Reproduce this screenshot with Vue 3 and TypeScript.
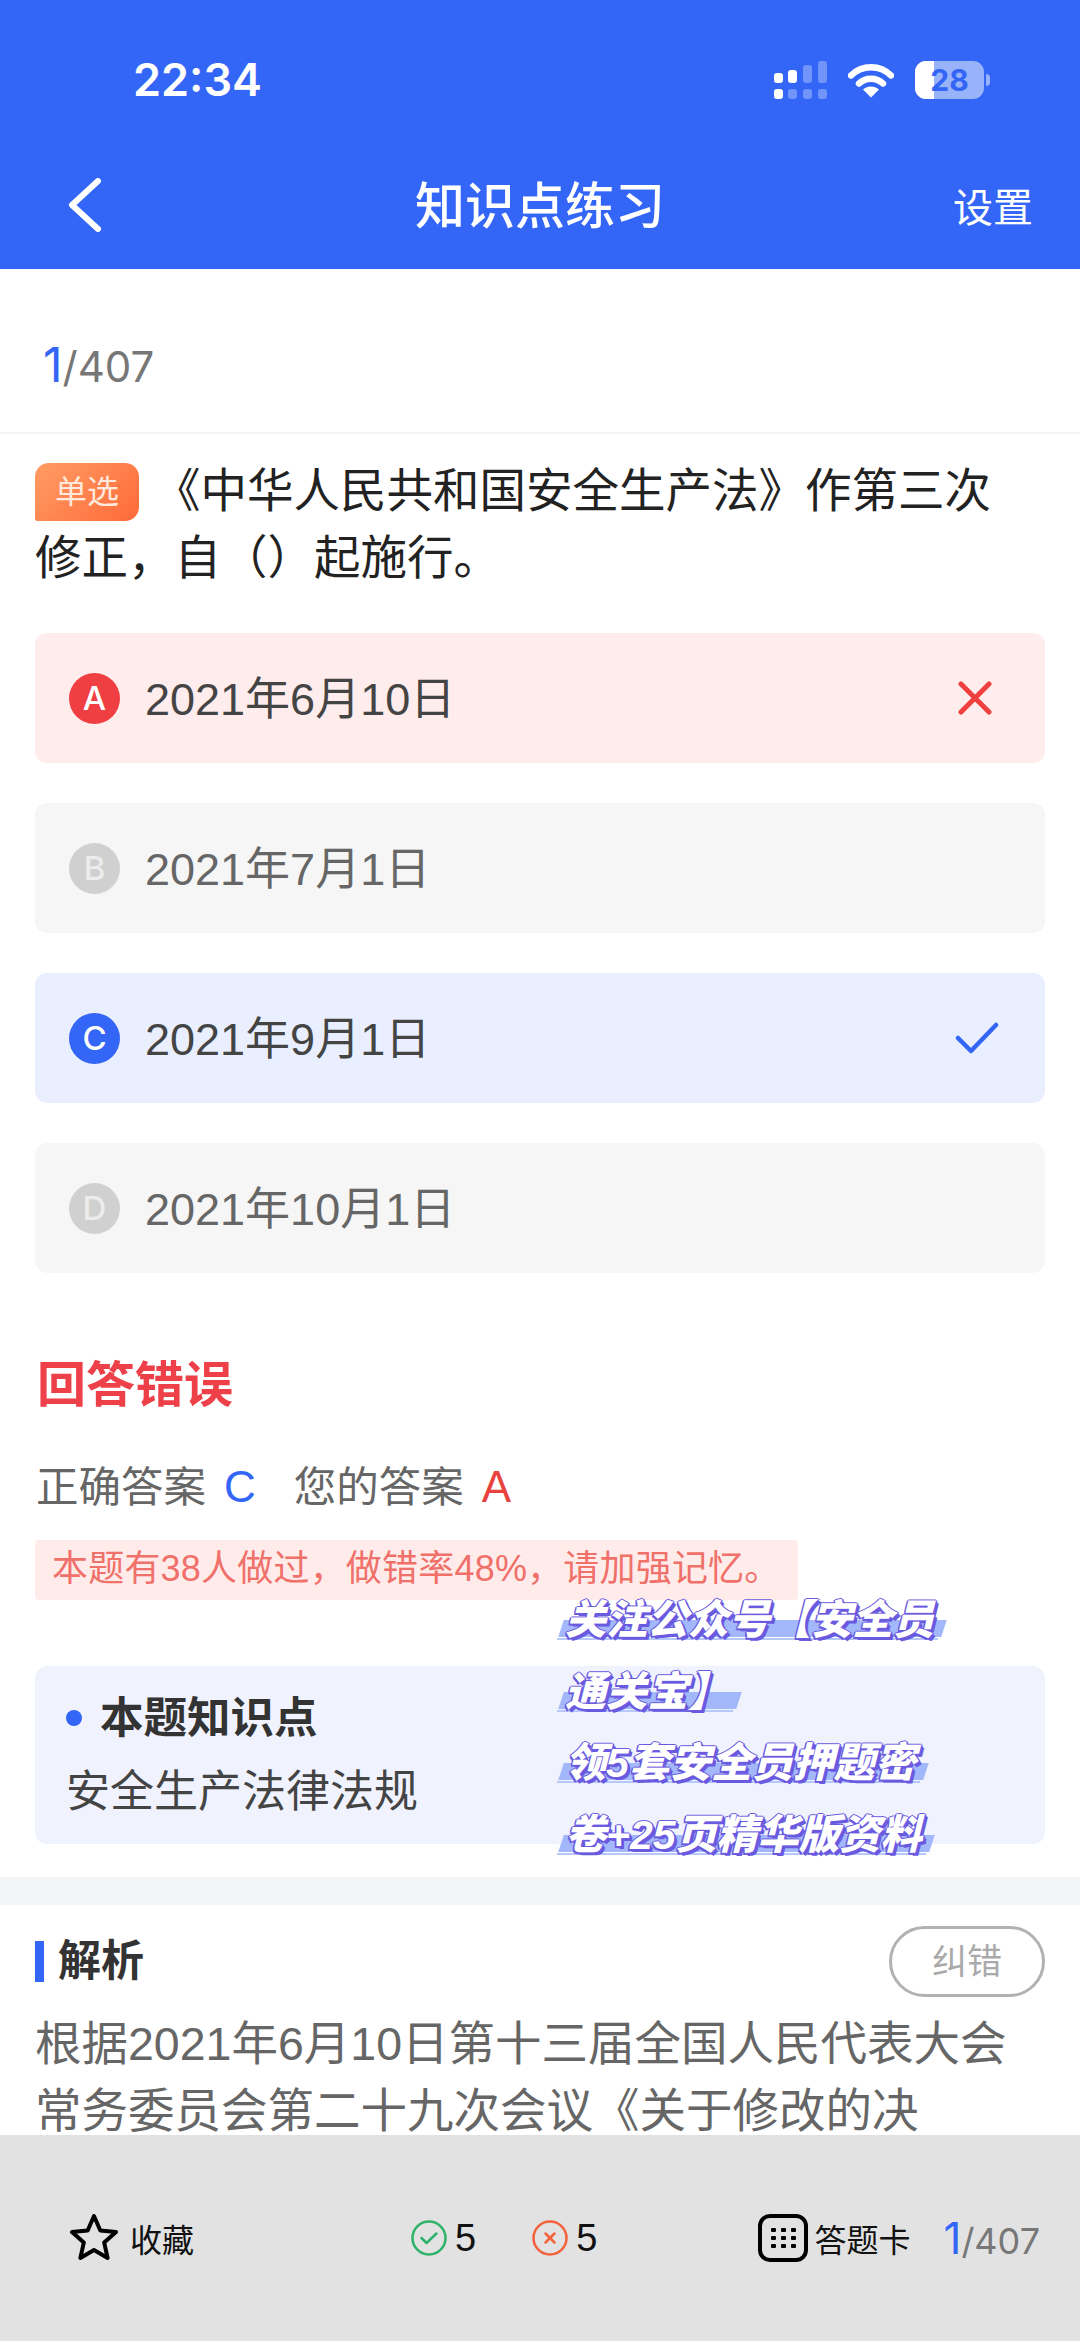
<script setup lang="ts">
type OptionState = 'wrong' | 'right' | 'idle'

const options: { key: string; text: string; state: OptionState }[] = [
  { key: 'A', text: '2021年6月10日', state: 'wrong' },
  { key: 'B', text: '2021年7月1日', state: 'idle' },
  { key: 'C', text: '2021年9月1日', state: 'right' },
  { key: 'D', text: '2021年10月1日', state: 'idle' },
]

const promoLines = ['关注公众号【安全员', '通关宝】', '领5套安全员押题密', '卷+25页精华版资料']
const gridDots = [0, 1, 2].flatMap((row) => [0, 1, 2].map((col) => ({ x: 13 + col * 10, y: 14 + row * 8 })))
</script>

<template>
  <div class="page">
    <header class="header">
      <div class="status">
        <span class="time">22:34</span>
        <div class="status-icons">
          <svg class="signal" width="53" height="38" viewBox="0 0 53 38" fill="#fff">
            <rect x="0" y="12" width="9" height="10" rx="3" />
            <rect x="14" y="9" width="9" height="13" rx="3" />
            <rect x="29" y="4" width="9" height="18" rx="3" opacity=".3" />
            <rect x="44" y="0" width="9" height="22" rx="3" opacity=".3" />
            <rect x="0" y="28" width="9" height="10" rx="3" />
            <rect x="14" y="28" width="9" height="10" rx="3" opacity=".3" />
            <rect x="29" y="28" width="9" height="10" rx="3" opacity=".3" />
            <rect x="44" y="28" width="9" height="10" rx="3" opacity=".3" />
          </svg>
          <svg class="wifi" width="46" height="35" viewBox="0 0 46 35">
            <path d="M3 12.5C14 1.5 32 1.5 43 12.500M11 20.500C17.500 14 28.500 14 35 20.500" fill="none" stroke="#fff" stroke-width="6.500" stroke-linecap="round" />
            <path d="M23 34.500 15 26.500C19.500 22.500 26.500 22.500 31 26.500Z" fill="#fff" />
          </svg>
          <div class="battery">
            <span class="battery-level"></span>
            <span class="battery-text">28</span>
          </div>
          <span class="battery-nub"></span>
        </div>
      </div>
      <nav class="nav">
        <svg class="back" width="34" height="54" viewBox="0 0 34 54" fill="none" stroke="#fff" stroke-width="6" stroke-linecap="round" stroke-linejoin="round">
          <path d="M30 3 4 27l26 24" />
        </svg>
        <h1 class="title">知识点练习</h1>
        <span class="settings">设置</span>
      </nav>
    </header>

    <main class="content">
      <div class="counter"><b>1</b>/407</div>

      <section class="question">
        <p class="stem"><span class="tag">单选</span>《中华人民共和国安全生产法》作第三次修正，自（）起施行。</p>

        <ul class="options">
          <li v-for="opt in options" :key="opt.key" class="option" :class="`option-${opt.state}`">
            <span class="letter">{{ opt.key }}</span>
            <span class="option-text">{{ opt.text }}</span>
            <svg v-if="opt.state === 'wrong'" class="mark mark-x" width="34" height="34" viewBox="0 0 34 34" fill="none" stroke="#ee4040" stroke-width="5" stroke-linecap="round">
              <path d="M3 3l28 28M31 3 3 31" />
            </svg>
            <svg v-if="opt.state === 'right'" class="mark" width="44" height="32" viewBox="0 0 44 32" fill="none" stroke="#3366f6" stroke-width="4.500" stroke-linecap="round" stroke-linejoin="round">
              <path d="M3 16l13 13L41 3" />
            </svg>
          </li>
        </ul>

        <h2 class="result">回答错误</h2>
        <p class="answers">
          正确答案<em class="blue">C</em><span class="answers-gap"></span>您的答案<em class="red">A</em>
        </p>
        <div class="notice">本题有38人做过，做错率48%，请加强记忆。</div>

        <div class="knowledge">
          <div class="knowledge-title"><i></i>本题知识点</div>
          <div class="knowledge-text">安全生产法律法规</div>
        </div>
      </section>

      <div class="band"></div>

      <section class="analysis">
        <div class="analysis-head">
          <h3>解析</h3>
          <span class="report">纠错</span>
        </div>
        <p class="analysis-text">根据2021年6月10日第十三届全国人民代表大会常务委员会第二十九次会议《关于修改的决</p>
      </section>
    </main>

    <footer class="bar">
      <div class="fav">
        <svg width="48" height="50" viewBox="0 0 48 50" fill="none" stroke="#000" stroke-width="4" stroke-linejoin="round">
          <path d="M24 3l6.300 14.500 15.700 1.600-11.800 10.500 3.400 15.400L24 37.100 10.400 45l3.400-15.400L2 19.100l15.700-1.600z" />
        </svg>
        <span>收藏</span>
      </div>
      <div class="tally">
        <svg width="36" height="36" viewBox="0 0 36 36" fill="none" stroke="#2fb36b" stroke-width="2.500" stroke-linecap="round" stroke-linejoin="round">
          <circle cx="18" cy="18" r="16.500" />
          <path d="M10.500 18l5 5 10-9.500" />
        </svg>
        <span class="tally-num">5</span>
        <svg class="tally-wrong" width="36" height="36" viewBox="0 0 36 36" fill="none" stroke="#f2633c" stroke-width="2.500" stroke-linecap="round">
          <circle cx="18" cy="18" r="16.500" />
          <path d="M13.500 13.500l9 9M22.500 13.500l-9 9" />
        </svg>
        <span class="tally-num">5</span>
      </div>
      <div class="card">
        <svg width="50" height="48" viewBox="0 0 50 48">
          <rect x="2" y="2" width="46" height="44" rx="10" fill="none" stroke="#000" stroke-width="4" />
          <rect v-for="(d, i) in gridDots" :key="i" :x="d.x" :y="d.y" width="5" height="4" rx="1" />
        </svg>
        <span class="card-label">答题卡</span>
        <span class="card-count"><b>1</b>/407</span>
      </div>
    </footer>

    <div class="promo">
      <div v-for="line in promoLines" :key="line" class="promo-row">
        <span class="promo-line">{{ line }}</span>
      </div>
    </div>
  </div>
</template>

<style>
html,
body {
  margin: 0;
  background: #fff;
}
</style>

<style scoped>
* {
  box-sizing: border-box;
}

.page {
  position: relative;
  display: flex;
  flex-direction: column;
  width: 1080px;
  height: 2341px;
  overflow: hidden;
  background: #fff;
  font-family: "Liberation Sans", "Noto Sans CJK SC", sans-serif;
}

.header {
  flex: none;
  height: 269px;
  padding: 61px 0 0;
  background: #3366f6;
  color: #fff;
}

.status {
  display: flex;
  justify-content: space-between;
  height: 38px;
  padding: 0 90px 0 133px;
}

.time {
  font-family: Inter, sans-serif;
  font-size: 45px;
  font-weight: 600;
  line-height: 38px;
}

.status-icons {
  display: flex;
  align-items: center;
}

.wifi {
  margin-left: 21px;
}

.battery {
  position: relative;
  width: 69px;
  height: 38px;
  margin-left: 21px;
  border-radius: 11px;
  overflow: hidden;
  background: rgba(255, 255, 255, 0.5);
}

.battery-level {
  display: block;
  width: 19px;
  height: 100%;
  background: #fff;
}

.battery-text {
  position: absolute;
  inset: 0;
  color: #3366f6;
  font-family: Inter, sans-serif;
  font-size: 30px;
  font-weight: 700;
  line-height: 38px;
  text-align: center;
}

.battery-nub {
  width: 4px;
  height: 12px;
  margin-left: 2px;
  border-radius: 0 4px 4px 0;
  background: rgba(255, 255, 255, 0.5);
}

.nav {
  position: relative;
  display: flex;
  align-items: center;
  justify-content: space-between;
  height: 64px;
  margin-top: 74px;
  padding: 0 47px 0 68px;
}

.title {
  position: absolute;
  top: 4px;
  left: 0;
  right: 0;
  margin: 0;
  font-size: 50px;
  font-weight: 500;
  line-height: 60px;
  text-align: center;
}

.settings {
  font-size: 40px;
}

.content {
  flex: 1;
  min-height: 0;
}

.counter {
  height: 165px;
  padding: 66px 0 0 43px;
  border-bottom: 2px solid #f4f4f4;
  color: #777;
  font-family: Inter, sans-serif;
  font-size: 42px;
  line-height: 60px;
}

.counter b,
.card-count b {
  color: #3366f6;
  font-size: 48px;
  font-weight: 400;
}

.question {
  padding: 24px 35px 0;
}

.stem {
  width: 975px;
  margin: 0;
  color: #222;
  font-size: 46.500px;
  line-height: 67px;
}

.tag {
  display: inline-block;
  width: 104px;
  height: 58px;
  margin-right: 15px;
  border-radius: 14px 14px 14px 2px;
  background: linear-gradient(135deg, #ff9c63, #ff6a3a);
  color: #ffe9dd;
  font-size: 32px;
  line-height: 58px;
  text-align: center;
  vertical-align: 4px;
}

.options {
  display: flex;
  flex-direction: column;
  gap: 40px;
  margin: 41px 0 0;
  padding: 0;
  list-style: none;
}

.option {
  display: flex;
  align-items: center;
  height: 130px;
  padding: 0 46px 0 34px;
  border-radius: 12px;
  background: #f6f6f6;
  color: #666;
  font-size: 45px;
}

.option-wrong {
  background: #ffecec;
  color: #444;
}

.option-right {
  background: #e9effe;
  color: #444;
}

.letter {
  flex: none;
  width: 51px;
  height: 51px;
  margin-right: 25px;
  border-radius: 50%;
  background: #d0d0d0;
  color: #ececec;
  font-family: Inter, sans-serif;
  font-size: 33px;
  font-weight: 500;
  line-height: 51px;
  text-align: center;
}

.option-wrong .letter {
  background: #f03f42;
  color: #fff;
}

.option-right .letter {
  background: #3366f6;
  color: #fff;
}

.option-text {
  flex: 1;
  padding-bottom: 5px;
}

.mark-x {
  margin-right: 7px;
}

.result {
  margin: 82px 0 0 2px;
  color: #ee4048;
  font-size: 49px;
  font-weight: 700;
  line-height: 60px;
}

.answers {
  height: 56px;
  margin: 44px 0 0 1px;
  color: #666;
  font-size: 42.500px;
  line-height: 56px;
}

.answers em {
  margin-left: 18px;
  font-size: 44px;
  font-style: normal;
}

.answers-gap {
  display: inline-block;
  width: 38px;
}

.blue {
  color: #3366f6;
}

.red {
  color: #e8433f;
}

.notice {
  width: 763px;
  height: 60px;
  margin-top: 25px;
  padding-left: 17px;
  border-radius: 4px;
  background: #ffecea;
  color: #f0706a;
  font-size: 36px;
  letter-spacing: 0.2px;
  line-height: 58px;
  white-space: nowrap;
}

.knowledge {
  height: 178px;
  margin-top: 66px;
  padding: 25px 31px 0;
  border-radius: 12px;
  background: #f0f3fe;
}

.knowledge-title {
  display: flex;
  align-items: center;
  color: #333;
  font-size: 43.500px;
  font-weight: 700;
  line-height: 54px;
}

.knowledge-title i {
  width: 16px;
  height: 16px;
  margin-right: 18px;
  border-radius: 50%;
  background: #3366f6;
}

.knowledge-text {
  margin-top: 20px;
  color: #444;
  font-size: 44px;
  line-height: 54px;
}

.band {
  height: 28px;
  margin-top: 33px;
  background: #f3f6f6;
}

.analysis {
  padding: 21px 35px 0;
}

.analysis-head {
  display: flex;
  align-items: center;
  justify-content: space-between;
}

.analysis-head h3 {
  height: 41px;
  margin: 0;
  padding-left: 14px;
  border-left: 9px solid #3366f6;
  color: #333;
  font-size: 43px;
  font-weight: 700;
  line-height: 41px;
}

.report {
  width: 156px;
  height: 71px;
  border: 3px solid #b2b2b2;
  border-radius: 36px;
  color: #aaa;
  font-size: 35px;
  line-height: 65px;
  text-align: center;
}

.analysis-text {
  width: 1000px;
  margin: 14px 0 0;
  color: #666;
  font-size: 46.500px;
  line-height: 67px;
}

.bar {
  position: relative;
  flex: none;
  display: flex;
  align-items: center;
  height: 206px;
  padding: 0 40px 0 70px;
  background: #e2e2e2;
  color: #111;
}

.fav {
  display: flex;
  align-items: center;
  width: 341px;
  font-size: 32px;
}

.fav span {
  margin-left: 12px;
}

.tally {
  display: flex;
  align-items: center;
}

.tally-num {
  margin-left: 8px;
  font-size: 38px;
}

.tally-wrong {
  margin-left: 56px;
}

.card {
  display: flex;
  align-items: center;
  margin-left: auto;
}

.card-label {
  margin-left: 6px;
  font-size: 32px;
}

.card-count {
  margin-left: 33px;
  color: #777;
  font-family: Inter, sans-serif;
  font-size: 36px;
}

.card-count b {
  font-size: 44px;
}

.promo {
  position: absolute;
  top: 1585px;
  left: 565px;
  font-size: 41px;
  font-style: italic;
  font-weight: 900;
  line-height: 71.600px;
}

.promo-row {
  height: 71.600px;
  white-space: nowrap;
}

.promo-line {
  position: relative;
  z-index: 0;
  display: inline-block;
  color: #fff;
  text-shadow: 1.500px 0 #6a5ae0, -1.500px 0 #6a5ae0, 0 -1.500px #6a5ae0, 2px 2px #6a5ae0, 3px 3px #6a5ae0, -1.500px 2px #6a5ae0;
}

.promo-line::before {
  content: "";
  position: absolute;
  z-index: -1;
  top: 35px;
  left: -4px;
  right: -10px;
  height: 17px;
  background: #a3b8fb;
  transform: skewX(-18deg);
}

.promo-line::after {
  content: "";
  position: absolute;
  z-index: -1;
  top: 53px;
  left: -8px;
  right: -4px;
  height: 2px;
  background: #b6c7fb;
}
</style>
